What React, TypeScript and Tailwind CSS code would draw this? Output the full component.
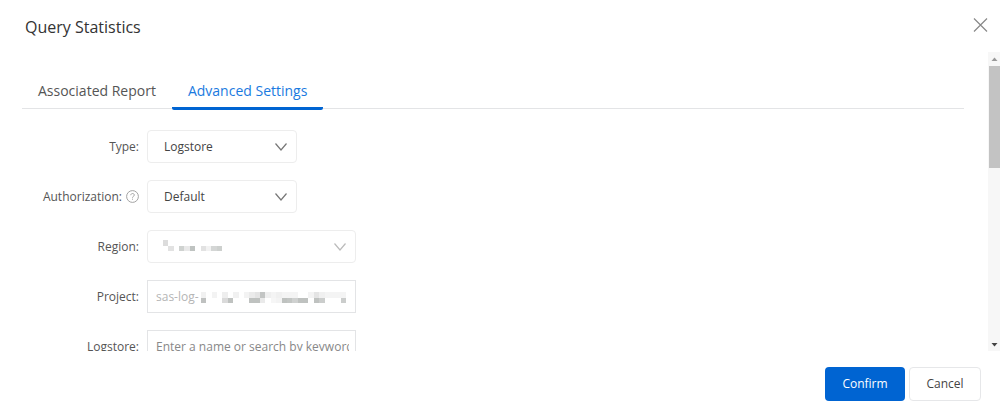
import React, { useState } from 'react';

type Cell = [col: number, row: number, color: string];

const regionCells: Cell[] = [
  [0, 0, '#dcdcdc'],
  [1, 1, '#e2e2e2'],
  [3, 1, '#cfd2d0'],
  [4, 1, '#e9e9e9'],
  [5, 1, '#bfc3c1'],
  [7, 1, '#e2e2e2'],
  [8, 1, '#f2f2f2'],
  [9, 1, '#d4d6d5'],
  [10, 1, '#cdd0ce'],
];

const projectCells: Cell[] = [
  [0, 0, '#f1f1f1'],
  [2, 0, '#f3f3f3'],
  [4, 0, '#eeeeee'],
  [6, 0, '#f1f1f1'],
  [8, 0, '#f3f3f3'],
  [9, 0, '#ebebeb'],
  [10, 0, '#e4e4e4'],
  [11, 0, '#c3c5c4'],
  [12, 0, '#efefef'],
  [13, 0, '#f4f4f4'],
  [14, 0, '#f0f0f0'],
  [15, 0, '#f4f4f4'],
  [16, 0, '#f4f4f4'],
  [17, 0, '#f4f4f4'],
  [20, 0, '#f3f3f3'],
  [21, 0, '#e4e4e4'],
  [22, 0, '#f0f0f0'],
  [23, 0, '#f4f4f4'],
  [24, 0, '#f4f4f4'],
  [25, 0, '#f4f4f4'],
  [26, 0, '#f4f4f4'],
  [0, 1, '#bfc1c0'],
  [4, 1, '#dadada'],
  [5, 1, '#bfc2c0'],
  [9, 1, '#bfc2c0'],
  [10, 1, '#bfc2c0'],
  [11, 1, '#eaeaea'],
  [13, 1, '#f6f6f6'],
  [14, 1, '#f3f3f3'],
  [15, 1, '#bfc2c0'],
  [16, 1, '#c3c6c4'],
  [17, 1, '#cfd1d0'],
  [18, 1, '#bfc2c0'],
  [19, 1, '#bfc2c0'],
  [21, 1, '#bfc2c0'],
  [22, 1, '#cbcdcc'],
  [26, 1, '#cbcdcc'],
];

const Mosaic: React.FC<{ cells: Cell[]; cols: number; className: string }> = ({
  cells,
  cols,
  className,
}) => (
  <svg
    className={className}
    viewBox={`0 0 ${cols} 2`}
    preserveAspectRatio="none"
    shapeRendering="crispEdges"
    aria-hidden="true"
  >
    {cells.map(([x, y, fill]) => (
      <rect key={`${x}-${y}`} x={x} y={y} width="1" height="1" fill={fill} />
    ))}
  </svg>
);

const Chevron: React.FC<{ className: string }> = ({ className }) => (
  <svg
    className={`pointer-events-none absolute right-2 top-1/2 h-3 w-4 -translate-y-1/2 ${className}`}
    viewBox="0 0 16 12"
    fill="none"
    stroke="currentColor"
    strokeWidth="1.2"
  >
    <path d="M2.5 2.5 8 9l5.5-6.5" />
  </svg>
);

const Row: React.FC<{
  id: string;
  label: string;
  help?: boolean;
  children: React.ReactNode;
}> = ({ id, label, help, children }) => (
  <div className="flex items-center gap-2">
    <div className="flex w-[117px] shrink-0 items-center justify-end gap-1 text-[#555]">
      <label htmlFor={id}>{label}</label>
      {help && (
        <svg
          className="h-[13px] w-[13px] text-[#999]"
          viewBox="0 0 13 13"
          fill="none"
          stroke="currentColor"
          strokeWidth="0.9"
        >
          <circle cx="6.5" cy="6.5" r="5.9" />
          <path d="M4.8 5.2c0-2.3 3.5-2.2 3.5-.1 0 1.3-1.8 1.2-1.8 2.6M6.5 8.7v1" />
        </svg>
      )}
    </div>
    {children}
  </div>
);

const selectClass =
  'block h-[33px] w-full appearance-none rounded-sm border border-[#ededed] bg-white pl-4 pr-8 text-[#444] outline-none';
const inputClass =
  'block h-[33px] w-full border border-[#e3e4e6] bg-white pl-2 pr-1.5 outline-none';

const tabs = ['Associated Report', 'Advanced Settings'];

const App: React.FC = () => {
  const [tab, setTab] = useState('Advanced Settings');
  const [type, setType] = useState('Logstore');
  const [authorization, setAuthorization] = useState('Default');
  const [logstore, setLogstore] = useState('');

  return (
    <div className="flex h-screen flex-col bg-white font-['Open_Sans',sans-serif] text-xs">
      {/* Header */}
      <div className="flex shrink-0 items-start justify-between pl-[25px] pr-3 pt-4 pb-3">
        <h1 className="text-base leading-[22px] text-[#333]">
          Query Statistics
        </h1>
        <button aria-label="Close" className="pb-2 text-[#888]">
          <svg
            className="h-4 w-4"
            viewBox="0 0 16 16"
            fill="none"
            stroke="currentColor"
            strokeWidth="1.2"
          >
            <path d="M2 2.5l13 13M15 2.5l-13 13" />
          </svg>
        </button>
      </div>

      {/* Scrollable body */}
      <div className="flex min-h-0 flex-1">
        <div className="min-w-0 flex-1 overflow-hidden pl-[22px] pr-6 pt-[29px]">
          <div role="tablist" className="flex border-b border-[#e3e4e6]">
            {tabs.map((name) => (
              <button
                key={name}
                role="tab"
                aria-selected={tab === name}
                onClick={() => setTab(name)}
                className={`-mb-0.5 rounded-b-xs border-b-3 px-4 pb-1.5 text-sm ${
                  tab === name
                    ? 'border-[#0064d2] text-[#1a7ae0]'
                    : 'border-transparent text-[#555]'
                }`}
              >
                {name}
              </button>
            ))}
          </div>

          <form className="flex flex-col gap-[17px] pt-[21px]">
            <Row id="type" label="Type:">
              <div className="relative w-[150px]">
                <select
                  id="type"
                  value={type}
                  onChange={(e) => setType(e.target.value)}
                  className={selectClass}
                >
                  <option>Logstore</option>
                </select>
                <Chevron className="text-[#777]" />
              </div>
            </Row>
            <Row id="authorization" label="Authorization:" help>
              <div className="relative w-[150px]">
                <select
                  id="authorization"
                  value={authorization}
                  onChange={(e) => setAuthorization(e.target.value)}
                  className={selectClass}
                >
                  <option>Default</option>
                </select>
                <Chevron className="text-[#777]" />
              </div>
            </Row>
            <Row id="region" label="Region:">
              <div className="relative w-[209px]">
                <select id="region" disabled className={selectClass} />
                <Mosaic
                  cells={regionCells}
                  cols={11}
                  className="pointer-events-none absolute left-4 top-2.5 h-[11px] w-[59px]"
                />
                <Chevron className="text-[#bbb]" />
              </div>
            </Row>
            <Row id="project" label="Project:">
              <div className="relative w-[209px]">
                <input
                  id="project"
                  disabled
                  value="sas-log-"
                  className={`${inputClass} text-[#b5b5b5]`}
                />
                <Mosaic
                  cells={projectCells}
                  cols={27}
                  className="pointer-events-none absolute right-2.5 top-3 h-[11px] w-[145px]"
                />
              </div>
            </Row>
            <Row id="logstore" label="Logstore:">
              <div className="w-[209px]">
                <input
                  id="logstore"
                  value={logstore}
                  onChange={(e) => setLogstore(e.target.value)}
                  placeholder="Enter a name or search by keyword"
                  className={`${inputClass} text-[#555] placeholder:text-[#888]`}
                />
              </div>
            </Row>
          </form>
        </div>

        {/* Scrollbar */}
        <div className="flex w-3 shrink-0 flex-col bg-[#f7f7f7]">
          <svg className="h-3.5 w-3" viewBox="0 0 12 14" fill="#999">
            <path d="M3.5 9h6l-3-3.5z" />
          </svg>
          <div className="flex-1">
            <div className="ml-px h-3/8 bg-[#c3c3c3]" />
          </div>
          <svg className="h-3.5 w-3" viewBox="0 0 12 14" fill="#444">
            <path d="M3.5 6h6l-3 3.5z" />
          </svg>
        </div>
      </div>

      {/* Footer */}
      <div className="flex shrink-0 justify-end gap-1 px-[19px] pt-4 pb-4">
        <button className="h-[34px] w-20 rounded-sm bg-[#0064d2] text-white">
          Confirm
        </button>
        <button className="h-[34px] w-[72px] rounded-sm border border-[#e6e7e9] bg-white text-[#444]">
          Cancel
        </button>
      </div>
    </div>
  );
};

export default App;
